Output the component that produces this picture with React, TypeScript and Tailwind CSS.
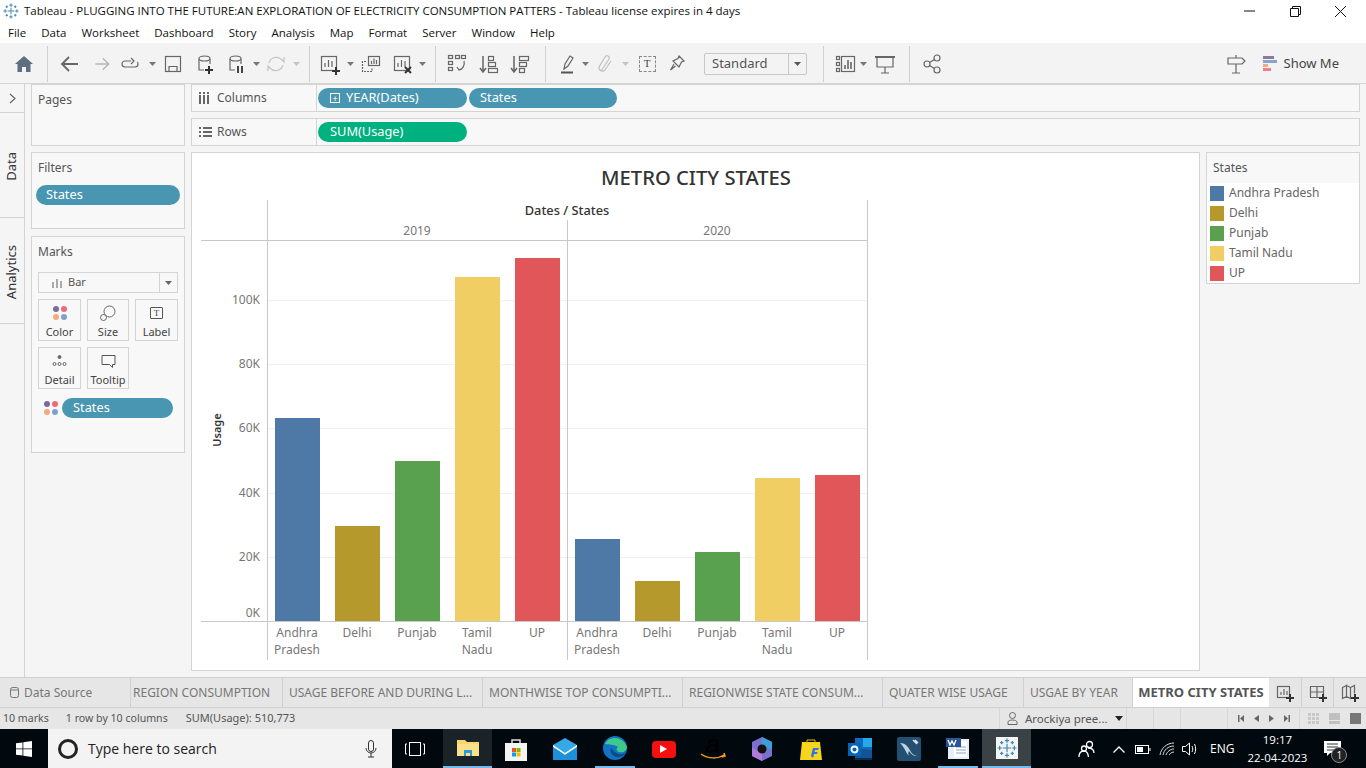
import React from "react";

const font = "font-['Noto_Sans',sans-serif]";
const Sep = () => <div className="w-px h-[36px] bg-[#d0d0d0] shrink-0" />;
const Caret = ({ light }: { light?: boolean }) => (
  <div className="w-[8px] flex justify-center shrink-0">
    <svg width="7" height="4"><path d="M0 0h7L3.5 4z" fill={light ? "#c4c4c4" : "#777"} /></svg>
  </div>
);
const S = ({ className, children, d, sw = 1.2, c = "#666", box = 24 }: { className: string; children?: React.ReactNode; d?: string; sw?: number; c?: string; box?: number }) => (
  <div className={`flex justify-center items-center shrink-0 ${className}`}>
    <svg width={box} height={box} viewBox={`0 0 ${box} ${box}`} fill="none" stroke={c} strokeWidth={sw}>
      {d && <path d={d} />}
      {children}
    </svg>
  </div>
);
const Plus = ({ x, y, c = "#333" }: { x: number; y: number; c?: string }) => <path d={`M${x - 4} ${y}h8M${x} ${y - 4}v8`} stroke={c} strokeWidth={2} />;

const TableauLogo = ({ size }: { size: number }) => {
  const p = (x: number, y: number, a: number) => `M${x - a} ${y}h${2 * a}M${x} ${y - a}v${2 * a}`;
  const d = [p(7.5, 7.5, 3.2), p(7.5, 2, 1.6), p(7.5, 13, 1.6), p(2, 7.5, 1.6), p(13, 7.5, 1.6), p(3.5, 3.5, 1.2), p(11.5, 3.5, 1.2), p(3.5, 11.5, 1.2), p(11.5, 11.5, 1.2)].join("");
  return (
    <svg width={size} height={size} viewBox="0 0 15 15" fill="none" stroke="#3f87b4" strokeWidth="0.900" className="shrink-0">
      <path d={d} />
    </svg>
  );
};

function Toolbar() {
  return (
    <div className="h-[41px] bg-[#f3f3f3] border-b border-[#d4d4d4] flex items-center shrink-0 pt-[1px]">
      <div className="w-[47px] flex justify-center shrink-0">
        <svg width="18" height="16" viewBox="0 0 18 16"><path d="M9 0L0 8h2.5v8h4.5v-5h4v5h4.500V8H18z" fill="#5f6f7f" /></svg>
      </div>
      <Sep />
      <S className="w-[44px]" d="M20 12H5M11 5l-7 7 7 7" sw={1.8} c="#666" />
      <S className="w-[20px]" d="M4 12h15M13 5l7 7-7 7" sw={1.8} c="#b8b8b8" />
      <S className="w-[36px]" d="M13 9H7a3 3 0 000 6h10a3 3 0 003-3c0-1-.500-2-1-2M13 6l3 3-3 3" c="#666" />
      <Caret />
      <S className="w-[34px]" c="#666"><rect x="4.500" y="4.500" width="15" height="15" /><path d="M8 19.500v-5h8v5" /></S>
      <S className="w-[30px]"><path d="M6 7v11h5" /><ellipse cx="11.500" cy="6.500" rx="5.500" ry="2.500" /><path d="M17 7v5" /><Plus x={16} y={18} /></S>
      <S className="w-[32px]"><path d="M6 7v11h5" /><ellipse cx="11.500" cy="6.500" rx="5.500" ry="2.500" /><path d="M17 7v5" /><path d="M14 14v7M18 14v7" stroke="#444" strokeWidth={2} /></S>
      <Caret />
      <S className="w-[32px]" d="M5 11a7.500 7.500 0 0113-3l2 2V5M19 13a7.500 7.500 0 01-13 3l-2-2v5" c="#c4c4c4" />
      <Caret light />
      <div className="w-[9px] shrink-0" />
      <Sep />
      <S className="w-[32px] ml-[4px]"><rect x="3.500" y="4.500" width="15" height="14" /><path d="M7 15v-4M10.500 15V8M14 15v-6" /><Plus x={18} y={19} /></S>
      <Caret />
      <S className="w-[34px]"><rect x="9.500" y="4.500" width="11" height="9" /><path d="M12.500 12V9M15 12V6.500M17.500 12V8" /><path d="M7 9.500H3.500V19.500H13V16" strokeDasharray="2 1" /></S>
      <S className="w-[30px]"><rect x="3.500" y="4.500" width="15" height="14" /><path d="M7 15v-4M10.500 15V8M14 15v-6" /><path d="M14 15l6 6M20 15l-6 6" stroke="#333" strokeWidth={2} /></S>
      <Caret />
      <div className="w-[9px] shrink-0" />
      <Sep />
      <S className="w-[42px]"><rect x="3.500" y="3.500" width="4" height="3" /><rect x="3.500" y="9.500" width="4" height="3" /><rect x="3.500" y="15.500" width="4" height="3" /><rect x="10.500" y="3.500" width="4" height="3" /><rect x="16.500" y="3.500" width="4" height="3" /><path d="M19 9c1 4-1 8-5 9M12 15l2 3 3-1" /></S>
      <S className="w-[24px]"><path d="M5 4v15M2 16l3 4 3-4" strokeWidth={1.5} /><rect x="10.500" y="4.500" width="5" height="4" /><rect x="10.500" y="10.500" width="7" height="4" /><rect x="10.500" y="16.500" width="9" height="4" /></S>
      <S className="w-[38px]"><path d="M5 4v15M2 16l3 4 3-4" strokeWidth={1.5} /><rect x="10.500" y="4.500" width="9" height="4" /><rect x="10.500" y="10.500" width="7" height="4" /><rect x="10.500" y="16.500" width="5" height="4" /></S>
      <div className="w-[5px] shrink-0" />
      <Sep />
      <S className="w-[26px] ml-[9px]"><path d="M8 17l1-5 5-8 3 2-5 8z" /><path d="M5 20.500h12" stroke="#555" strokeWidth={2} /></S>
      <Caret />
      <S className="w-[30px]" d="M9 19l8-12a2 2 0 00-4-2L7 15a3.500 3.500 0 006 3l6-9" c="#c0c0c0" />
      <div className="w-[2px] shrink-0" />
      <Caret light />
      <div className="w-[36px] h-[24px] flex justify-center items-center shrink-0">
        <div className="w-[17px] h-[16px] border border-dashed border-[#888] flex items-center justify-center text-[11px] leading-none text-[#444] font-['Liberation_Serif',serif]">T</div>
      </div>
      <S className="w-[24px]" d="M14 4l5 5-2.500 1-2.500 5-6-6 5-2.500zM9 12l-3.500 6 5-4" />
      <div className={`ml-[15px] w-[103px] h-[22px] border border-[#c8c8c8] rounded-[2px] flex items-center shrink-0 ${font}`}>
        <span className="flex-1 pl-[7px] text-[13px] text-[#555]">Standard</span>
        <div className="w-[18px] h-full border-l border-[#c8c8c8] flex items-center justify-center">
          <svg width="7" height="4"><path d="M0 0h7L3.500 4z" fill="#555" /></svg>
        </div>
      </div>
      <div className="w-[16px] shrink-0" />
      <Sep />
      <S className="w-[27px] ml-[8px]"><rect x="2.500" y="4.500" width="3" height="3" /><rect x="2.500" y="10.500" width="3" height="3" /><rect x="2.500" y="16.500" width="3" height="3" /><rect x="7.500" y="4.500" width="13" height="15" /><path d="M11 17v-4M14 17V8M17 17v-7" strokeWidth={1.600} /></S>
      <Caret />
      <S className="w-[36px]"><path d="M2 5h20" strokeWidth={2} /><path d="M4 5v10h16V5M12 15v6M8 21h8" /></S>
      <div className="w-[6px] shrink-0" />
      <Sep />
      <S className="w-[44px]"><circle cx="17" cy="6" r="3" /><circle cx="7" cy="12" r="3" /><circle cx="17" cy="18" r="3" /><path d="M9.500 10.500l5-3M9.500 13.500l5 3" /></S>
      <div className="flex-1" />
      <S className="w-[28px]"><path d="M4 6h14l3 3-3 3H4zM12 6V3M12 12v9M8 21h8" /></S>
      <div className="w-[13px] shrink-0" />
      <div className="flex flex-col gap-[1px] w-[15px] shrink-0">
        <div className="h-[3px] w-[11px] bg-[#8a7aa0]" />
        <div className="h-[3px] w-[14px] bg-[#85a5cc]" />
        <div className="h-[3px] w-[5px] bg-[#f4a97f]" />
        <div className="h-[3px] w-[8px] bg-[#f47c8a]" />
      </div>
      <span className={`ml-[6px] mr-[27px] text-[13px] text-[#444] ${font}`}>Show Me</span>
    </div>
  );
}

const Pill = ({ className, children }: { className: string; children: React.ReactNode }) => (
  <div className={`h-[20px] rounded-full flex items-center text-white text-[12.800px] ${className}`}>{children}</div>
);

const MarkBtn = ({ label, className = "", children }: { label: string; className?: string; children: React.ReactNode }) => (
  <div className={`h-[42px] border border-[#d4d4d4] flex flex-col items-center text-[11px] leading-none text-[#444] ${className}`}>
    <div className="h-[26px] flex items-center justify-center">{children}</div>
    <span>{label}</span>
  </div>
);

const Dots = () => (
  <div className="grid grid-cols-2 gap-[2px] w-[14px] shrink-0">
    <div className="w-[6px] h-[6px] rounded-full bg-[#7d6b96]" />
    <div className="w-[6px] h-[6px] rounded-full bg-[#ee6a78]" />
    <div className="w-[6px] h-[6px] rounded-full bg-[#f4a97f]" />
    <div className="w-[6px] h-[6px] rounded-full bg-[#7fa2cc]" />
  </div>
);

function Sidebar() {
  const card = "bg-[#f8f8f8] border border-[#d4d4d4] shrink-0 text-[12px] text-[#555]";
  return (
    <div className="w-[154px] ml-[6px] flex flex-col shrink-0">
      <div className={`${card} h-[62px] pt-[6px] pl-[6px]`}>Pages</div>
      <div className={`${card} h-[77px] mt-[6px] pt-[6px] pl-[4px]`}>
        <div className="pl-[2px]">Filters</div>
        <Pill className="w-[144px] mt-[8px] pl-[10px] bg-[#4996b2]">States</Pill>
      </div>
      <div className={`${card} h-[217px] mt-[7px] pt-[6px] pl-[6px]`}>
        <div>Marks</div>
        <div className="w-[140px] h-[21px] mt-[11px] border border-[#d4d4d4] flex items-center">
          <svg className="ml-[12px]" width="12" height="10" viewBox="0 0 12 10" fill="#aaa"><path d="M1 4h2v6H1zM5 1h2v9H5zM9 3h2v7H9z" /></svg>
          <span className="flex-1 ml-[5px] text-[11px]">Bar</span>
          <div className="w-[18px] h-full border-l border-[#d4d4d4] flex items-center justify-center">
            <svg width="7" height="4"><path d="M0 0h7L3.500 4z" fill="#666" /></svg>
          </div>
        </div>
        <div className="flex mt-[6px]">
          <MarkBtn label="Color" className="w-[43px]"><Dots /></MarkBtn>
          <MarkBtn label="Size" className="w-[42px] ml-[6px]">
            <svg width="16" height="16" viewBox="0 0 16 16" fill="none" stroke="#666"><circle cx="9.500" cy="6.500" r="5.500" /><circle cx="3.500" cy="12.500" r="3" fill="#f8f8f8" /></svg>
          </MarkBtn>
          <MarkBtn label="Label" className="w-[43px] ml-[6px]">
            <div className="w-[13px] h-[12px] border border-[#555] rounded-[1px] flex items-center justify-center text-[9px] font-['Liberation_Serif',serif]">T</div>
          </MarkBtn>
        </div>
        <div className="flex mt-[6px]">
          <MarkBtn label="Detail" className="w-[43px]">
            <svg width="15" height="12" viewBox="0 0 15 12" fill="none" stroke="#666"><circle cx="7.500" cy="2" r="1.500" fill="#666" /><circle cx="2.500" cy="9" r="1.500" /><circle cx="7.500" cy="9" r="1.500" /><circle cx="12.500" cy="9" r="1.500" /></svg>
          </MarkBtn>
          <MarkBtn label="Tooltip" className="w-[42px] ml-[6px]">
            <svg width="15" height="15" viewBox="0 0 15 15" fill="none" stroke="#555"><path d="M1 1.500h13v9h-2.500v3l-3-3H1z" /></svg>
          </MarkBtn>
        </div>
        <div className="flex items-center mt-[9px] ml-[6px]">
          <Dots />
          <Pill className="w-[111px] ml-[4px] pl-[11px] bg-[#4996b2]">States</Pill>
        </div>
      </div>
    </div>
  );
}

const bars = [
  [275, 418, "#4e79a7"], [335, 526, "#b6992d"], [395, 461, "#59a14f"], [455, 277, "#f1ce63"], [515, 258, "#e15759"],
  [575, 539, "#4e79a7"], [635, 581, "#b6992d"], [695, 552, "#59a14f"], [755, 478, "#f1ce63"], [815, 475, "#e15759"],
] as const;
const ticks = [[300, "100K", 304], [364, "80K", 368], [428, "60K", 432], [493, "40K", 497], [557, "20K", 561], [621, "0K", 617]] as const;
const names = [["Andhra", "Pradesh"], ["Delhi"], ["Punjab"], ["Tamil", "Nadu"], ["UP"]];

function Chart() {
  return (
    <div className="w-[1009px] h-[519px] bg-white border border-[#d4d4d4] shrink-0">
      <svg width="1007" height="517" viewBox="192 153 1007 517" className={font}>
        <text x="696" y="185" textAnchor="middle" fontSize="20.200" fontWeight="500" fill="#333">METRO CITY STATES</text>
        <text x="567" y="215" textAnchor="middle" fontSize="12.800" fontWeight="500" fill="#333">Dates / States</text>
        <text x="417" y="235" textAnchor="middle" fontSize="12" fill="#777">2019</text>
        <text x="717" y="235" textAnchor="middle" fontSize="12" fill="#777">2020</text>
        {ticks.slice(0, 5).map(([y]) => <path key={y} d={`M268 ${y}.5H867`} stroke="#f0f0f0" />)}
        <path d="M201 240.500H868M201 621.500H868M267.500 200V660M567.500 220V660M867.500 200V660" stroke="#c8c8c8" />
        {bars.map(([x, y, c]) => <rect key={x} x={x} y={y} width="45" height={621 - y} fill={c} />)}
        {ticks.map(([y, t, ty]) => <text key={t} x="260" y={ty} textAnchor="end" fontSize="12" fill="#777">{t}</text>)}
        <text transform="translate(221 430) rotate(-90)" textAnchor="middle" fontSize="11" fontWeight="600" fill="#333">Usage</text>
        {[297, 597].map((x0) => names.map((n, i) => n.map((l, j) => (
          <text key={`${x0}${l}`} x={x0 + i * 60} y={637 + j * 17} textAnchor="middle" fontSize="12" fill="#777">{l}</text>
        ))))}
      </svg>
    </div>
  );
}

const legend = [["Andhra Pradesh", "bg-[#4e79a7]"], ["Delhi", "bg-[#b6992d]"], ["Punjab", "bg-[#59a14f]"], ["Tamil Nadu", "bg-[#f1ce63]"], ["UP", "bg-[#e15759]"]];

function Shelf({ label, icon, children, className }: { label: string; icon: React.ReactNode; children: React.ReactNode; className: string }) {
  return (
    <div className={`bg-[#f8f8f8] border border-[#d4d4d4] flex items-center shrink-0 text-[12px] text-[#555] ${className}`}>
      <div className="w-[125px] h-full border-r border-[#d4d4d4] flex items-center pl-[7px] shrink-0">
        <div className="w-[18px]">{icon}</div>
        <span>{label}</span>
      </div>
      {children}
    </div>
  );
}

function Main() {
  return (
    <div className={`flex h-[593px] bg-[#f5f5f5] shrink-0 ${font}`}>
      <div className="w-[25px] border-r border-[#d4d4d4] flex flex-col text-[13px] text-[#333] shrink-0">
        <div className="h-[29px] border-b border-[#d4d4d4] flex items-center justify-center">
          <svg width="7" height="11" fill="none" stroke="#666" strokeWidth="1.200"><path d="M1 1l5 4.500-5 4.500" /></svg>
        </div>
        <div className="h-[105px] border-b border-[#d4d4d4] flex items-center justify-center pt-[2px]"><span className="[writing-mode:vertical-rl] rotate-180">Data</span></div>
        <div className="h-[106px] border-b border-[#d4d4d4] flex items-center justify-center pt-[4px]"><span className="[writing-mode:vertical-rl] rotate-180">Analytics</span></div>
      </div>
      <Sidebar />
      <div className="ml-[6px] w-[1169px] flex flex-col shrink-0">
        <Shelf className="h-[28px]" label="Columns" icon={<svg width="11" height="12" fill="#666"><path d="M0 3h2v9H0zM4 3h2v9H4zM8 3h2v9H8zM0 0h2v2H0zM4 0h2v2H4zM8 0h2v2H8z" /></svg>}>
          <Pill className="w-[149px] ml-[1px] pl-[12px] bg-[#4996b2]">
            <span className="w-[10px] h-[10px] border border-white mr-[6px] flex items-center justify-center text-[9px] leading-none">+</span>
            YEAR(Dates)
          </Pill>
          <Pill className="w-[148px] ml-[2px] pl-[11px] bg-[#4996b2]">States</Pill>
        </Shelf>
        <Shelf className="h-[28px] mt-[6px]" label="Rows" icon={<svg width="13" height="10" fill="#666"><path d="M0 0h2v2H0zM4 0h9v2H4zM0 4h2v2H0zM4 4h9v2H4zM0 8h2v2H0zM4 8h9v2H4z" /></svg>}>
          <Pill className="w-[149px] ml-[1px] pl-[12px] bg-[#00b180]">SUM(Usage)</Pill>
        </Shelf>
        <div className="flex mt-[6px] items-start">
          <Chart />
          <div className="w-[154px] h-[132px] ml-[6px] bg-[#f8f8f8] border border-[#d4d4d4] shrink-0 text-[12px] text-[#555]">
            <div className="h-[30px] pl-[6px] pt-[6px]">States</div>
            <div className="bg-white h-[100px]">
              {legend.map(([n, c]) => (
                <div key={n} className="h-[20px] flex items-center pl-[3px]">
                  <div className={`w-[14px] h-[15px] ${c}`} />
                  <span className="ml-[5px] text-[#666]">{n}</span>
                </div>
              ))}
            </div>
          </div>
        </div>
      </div>
    </div>
  );
}

const tabs = [
  ["REGION CONSUMPTION", "w-[152px] pl-[2px]"],
  ["USAGE BEFORE AND DURING L...", "w-[200px] pl-[6px]"],
  ["MONTHWISE TOP CONSUMPTI...", "w-[200px] pl-[6px]"],
  ["REGIONWISE STATE CONSUM...", "w-[200px] pl-[6px]"],
  ["QUATER WISE USAGE", "w-[141px] pl-[6px]"],
  ["USGAE BY YEAR", "w-[109px] pl-[6px]"],
];

function Tabs() {
  return (
    <div className={`h-[31px] bg-[#e6e6e6] border-y border-[#d0d0d0] flex shrink-0 text-[12px] text-[#777] ${font}`}>
      <div className="w-[131px] border-r border-[#d0d0d0] flex items-center pl-[10px] shrink-0">
        <svg width="9" height="11" viewBox="0 0 9 11" fill="none" stroke="#777" className="mr-[5px]"><rect x="0.500" y="0.500" width="8" height="10" rx="2" /><path d="M0.500 3h8" /></svg>
        Data Source
      </div>
      {tabs.map(([t, w]) => (
        <div key={t} className={`${w} border-r border-[#d0d0d0] flex items-center shrink-0 whitespace-nowrap overflow-hidden`}>{t}</div>
      ))}
      <div className="w-[136px] bg-white flex items-center justify-center font-bold text-[13px] text-[#555] shrink-0">METRO CITY STATES</div>
      <S className="w-[32px]" box={20}><rect x="2.500" y="3.500" width="12" height="11" /><path d="M6 12V9M9 12V6M12 12V8" /><Plus x={15} y={15} /></S>
      <S className="w-[32px] border-l border-[#d0d0d0]" box={20}><path d="M2.500 3.500h13v11h-13zM2.500 9h13M9 3.500v11" /><Plus x={15} y={15} /></S>
      <S className="w-[33px] border-l border-[#d0d0d0]" box={20}><path d="M2.500 4.500l4-2v11l-4 2zM6.500 2.500l4 2v11l-4-2zM10.500 4.500l4-2v8" /><Plus x={15} y={15} /></S>
    </div>
  );
}

function Status() {
  const b = "h-full border-l border-[#d8d8d8] shrink-0";
  return (
    <div className={`h-[21px] bg-[#e6e6e6] flex items-center shrink-0 text-[10.600px] text-[#555] ${font}`}>
      <span className="ml-[3px]">10 marks</span>
      <span className="ml-[17px]">1 row by 10 columns</span>
      <span className="ml-[18px] text-[11px]">SUM(Usage): 510,773</span>
      <div className="flex-1" />
      <div className={`${b} w-[127px] flex items-center pl-[7px]`}>
        <svg width="11" height="13" viewBox="0 0 11 13" fill="none" stroke="#666"><circle cx="5.500" cy="3.500" r="3" /><path d="M1 12.500V10c0-1 2-2 4.500-2S10 9 10 10v2.500z" /></svg>
        <span className="ml-[7px] text-[11.500px]">Arockiya pree...</span>
        <svg className="ml-[7px]" width="8" height="5"><path d="M0 0h8L4 5z" fill="#222" /></svg>
      </div>
      <div className={`${b} w-[27px]`} />
      <div className={`${b} w-[27px]`} />
      <div className={`${b} w-[47px]`} />
      <div className={`${b} w-[72px] flex items-center justify-center gap-[10px]`}>
        <svg width="6" height="7" fill="#666"><path d="M0 0h1.500v7H0zM6 0v7L2 3.500z" /></svg>
        <svg width="5" height="7" fill="#666"><path d="M5 0v7L0 3.500z" /></svg>
        <svg width="5" height="7" fill="#666"><path d="M0 0v7l5-3.500z" /></svg>
        <svg width="6" height="7" fill="#666"><path d="M0 0v7l4-3.500zM4.500 0H6v7H4.500z" /></svg>
      </div>
      <div className={`${b} w-[67px] flex items-center pl-[8px] gap-[10px]`}>
        <div className="w-[11px] h-[11px] grid grid-cols-3 gap-[1px]">
          {[0, 1, 2, 3, 4, 5, 6, 7, 8].map((i) => <div key={i} className="bg-[#c8c8c8]" />)}
        </div>
        <div className="w-[11px] h-[11px] flex flex-col gap-[1px]"><div className="h-[7px] bg-[#c0c0c0]" /><div className="h-[3px] bg-[#c0c0c0]" /></div>
        <div className="w-[11px] h-[11px] bg-[#777]" />
      </div>
    </div>
  );
}

const Slot = ({ className = "", children }: { className?: string; children: React.ReactNode }) => (
  <div className={`w-[49px] h-full flex items-center justify-center shrink-0 ${className}`}>{children}</div>
);
const Open = ({ children }: { children: React.ReactNode }) => (
  <div className="w-[40px] h-full flex items-center justify-center border-b-[3px] border-[#76b9ed]">{children}</div>
);

function Taskbar() {
  return (
    <div className="h-[40px] bg-[#01090e] flex items-center shrink-0 text-white font-['Open_Sans',sans-serif]">
      <div className="w-[48px] flex justify-center shrink-0">
        <svg width="16" height="16" viewBox="0 0 16 16" fill="#fff"><path d="M0 2.300L6.500 1.400V7.500H0zM7.300 1.300L16 0V7.500H7.300zM0 8.300H6.500V14.600L0 13.700zM7.300 8.300H16V16L7.300 14.700z" /></svg>
      </div>
      <div className="w-[344px] h-full bg-[#f3f3f3] flex items-center pl-[10px] shrink-0 text-[#222]">
        <div className="w-[20px] h-[20px] rounded-full border-[3px] border-[#222]" />
        <span className="ml-[10px] flex-1 text-[14px] pb-[2px]">Type here to search</span>
        <svg className="mr-[15px]" width="12" height="18" viewBox="0 0 12 18" fill="none" stroke="#333"><rect x="3.500" y="0.500" width="5" height="11" rx="2.500" /><path d="M1 8a5 5 0 0010 0M6 13v4M3 17h6" /></svg>
      </div>
      <div className="w-[46px] flex justify-center shrink-0">
        <svg width="20" height="14" viewBox="0 0 20 14" fill="none" stroke="#fff"><rect x="4.500" y="0.500" width="11" height="13" /><path d="M2 2H0.500V12H2M18 2h1.500V12H18" /></svg>
      </div>
      <div className="w-[5px] shrink-0" />
      <Slot className="bg-[#1a2327] border-b-[3px] border-[#76b9ed]">
        <svg width="22" height="18" viewBox="0 0 22 18"><path d="M0 1h8l2 2h12v14H0z" fill="#f9d76c" /><path d="M0 5h22v12H0z" fill="#fbe08a" /><path d="M7 11h8v6h-2v-3H9v3H7z" fill="#2a9bd8" /></svg>
      </Slot>
      <Slot>
        <svg className="-ml-[2px]" width="24" height="24" viewBox="0 0 24 24"><path d="M8 7V3h8v4" fill="none" stroke="#ddd" strokeWidth="1.500" /><rect x="1" y="6" width="22" height="18" fill="#f4f4f4" /><path d="M8 11h4v4H8z" fill="#f25022" /><path d="M12.500 11h4v4h-4z" fill="#7fba00" /><path d="M8 15.500h4v4H8z" fill="#00a4ef" /><path d="M12.500 15.500h4v4h-4z" fill="#ffb900" /></svg>
      </Slot>
      <Slot>
        <svg className="-ml-[1px]" width="24" height="22" viewBox="0 0 24 22"><path d="M12 0l12 7v15H0V7z" fill="#35a8e8" /><path d="M0 7l12 8 12-8v2L12 17 0 9z" fill="#fff" /><path d="M0 9l12 8 12-8v13H0z" fill="#1c90d8" /></svg>
      </Slot>
      <Slot>
        <Open>
          <svg width="24" height="24" viewBox="0 0 24 24"><circle cx="12" cy="12" r="12" fill="#1173c4" /><path d="M2 8C5 0 20-1 24 11c0 4-4 6-8 5-3-1-3-4-1-5-4-3-9-2-13-3z" fill="#3ec98a" /><path d="M8 12c-2 5 3 10 8 9 4-.500 6-3 7-5-3 3-8 3-11 0-2-1-3-3-4-4z" fill="#0c4a80" /></svg>
        </Open>
      </Slot>
      <Slot>
        <div className="w-[24px] h-[17px] bg-[#f50f0f] rounded-[4px] flex items-center justify-center">
          <svg width="7" height="8"><path d="M0 0l7 4-7 4z" fill="#fff" /></svg>
        </div>
      </Slot>
      <Slot>
        <svg width="26" height="24" viewBox="0 0 26 24" fill="none"><path d="M9 6c1-4 8-4 8 0v9M17 8c-6 0-10 1-10 4.500S14 16 17 12" stroke="#000" strokeWidth="2.500" /><path d="M1 17c7 5 17 5 23 1M24 16l1 3-3 1" stroke="#f59b1c" strokeWidth="1.500" /></svg>
      </Slot>
      <Slot>
        <svg width="22" height="24" viewBox="0 0 22 24"><path d="M11 0l10 5v14l-10 5L1 19V5z" fill="#7d6fd0" /><path d="M11 0l10 5v8l-10-5z" fill="#3aa0d8" /><path d="M1 11l10 5v8l-10-5z" fill="#b27ad8" /><circle cx="11" cy="12" r="4.500" fill="#111" /></svg>
      </Slot>
      <Slot>
        <svg width="22" height="22" viewBox="0 0 22 22"><path d="M2 4h18l2 18H0z" fill="#f7d51d" /><path d="M7 5V2h8v3" fill="none" stroke="#e6b800" /><path d="M11 18l2-8h6l-1 2h-3l-.500 2h3l-.500 2h-3l-1 4z" fill="#2874f0" /></svg>
      </Slot>
      <Slot>
        <svg width="24" height="22" viewBox="0 0 24 22"><path d="M7 0h17v20H7z" fill="#0f6cbd" /><path d="M15 0h9v9h-9z" fill="#28a8ea" /><path d="M7 10l17 2v10H7z" fill="#14447d" opacity=".6" /><rect x="0" y="5" width="13" height="13" fill="#0364b8" /><circle cx="6.500" cy="11.500" r="3" fill="none" stroke="#fff" strokeWidth="1.800" /></svg>
      </Slot>
      <Slot>
        <svg width="24" height="24" viewBox="0 0 24 24"><rect width="24" height="24" rx="2" fill="#234f72" /><path d="M3 6c6 0 9 5 11 9 1 2 3 3 6 4-4 0-6-2-8-5-1 2-1 3 0 5-3-3-4-8-9-13z" fill="#bcd3e3" /><path d="M16 3l4 4M18 3l3 3" stroke="#dde" strokeWidth="1.500" /></svg>
      </Slot>
      <Slot>
        <Open>
          <svg width="24" height="24" viewBox="0 0 24 24"><rect x="2" y="3" width="21" height="20" fill="#e8eef6" /><rect x="8" y="5" width="13" height="16" fill="#fff" /><path d="M10 11h10M10 14h10M10 17h10" stroke="#8aa4cc" /><rect x="0" y="2" width="15" height="9" fill="#2a5699" /><path d="M2 4l2 5 2-4 2 4 2-5" stroke="#fff" strokeWidth="1.300" fill="none" /></svg>
        </Open>
      </Slot>
      <Slot className="bg-[#3a4246] border-b-[3px] border-[#76b9ed]">
        <div className="w-[22px] h-[22px] bg-[#f4f4f4] flex items-center justify-center">
          <TableauLogo size={20} />
        </div>
      </Slot>
      <div className="w-[47px] shrink-0" />
      <svg className="shrink-0" width="18" height="18" viewBox="0 0 18 18" fill="none" stroke="#fff" strokeWidth="1.300"><circle cx="11.500" cy="4.500" r="3" /><circle cx="6" cy="8.500" r="2.500" /><path d="M1 17c0-4 2-6 5-6s4 2 4.500 6M10 8c3 0 6 1 6 5" /></svg>
      <div className="w-[17px] shrink-0" />
      <svg className="shrink-0" width="12" height="7" viewBox="0 0 12 7" fill="none" stroke="#fff" strokeWidth="1.300"><path d="M0.500 6.500L6 1l5.500 5.500" /></svg>
      <div className="w-[10px] shrink-0" />
      <svg className="shrink-0" width="16" height="9" viewBox="0 0 16 9" fill="none" stroke="#fff"><rect x="0.500" y="0.500" width="13" height="8" /><rect x="2" y="2" width="6" height="5" fill="#fff" stroke="none" /><path d="M15 3v3" /></svg>
      <div className="w-[8px] shrink-0" />
      <svg className="shrink-0" width="16" height="14" viewBox="0 0 16 14" fill="none" stroke="#ddd"><path d="M1 13C2 6 8 1 15 1M4 13C5 8 9 4 15 4M7 13c1-3 4-6 8-6M10 13c1-1 2-3 5-3" /></svg>
      <div className="w-[7px] shrink-0" />
      <svg className="shrink-0" width="17" height="14" viewBox="0 0 17 14" fill="none" stroke="#fff"><path d="M0.500 4.500h3l4-3.500v12l-4-3.500h-3zM10 4c1 2 1 4 0 6M12.500 2c1.500 3 1.500 7 0 10" /></svg>
      <span className="ml-[11px] text-[12px] shrink-0">ENG</span>
      <div className="ml-[6px] w-[74px] flex flex-col items-center text-[11.500px] leading-[18px] shrink-0 whitespace-nowrap">
        <span>19:17</span>
        <span>22-04-2023</span>
      </div>
      <div className="relative ml-[10px] shrink-0">
        <svg width="17" height="16" viewBox="0 0 17 16" fill="#fff"><path d="M0 0h17v12H6l-3 3v-3H0z" /><path d="M3 3h11M3 6h11M3 9h8" stroke="#333" /></svg>
        <div className="absolute left-[7px] top-[6px] w-[16px] h-[16px] rounded-full bg-[#222] border border-[#888] flex items-center justify-center text-[10px] leading-none">1</div>
      </div>
    </div>
  );
}

export default function App() {
  return (
    <div className="w-[1366px] h-[768px] overflow-hidden bg-white flex flex-col font-['Open_Sans',sans-serif]">
      <div className="h-[22px] flex items-center shrink-0 relative text-[11.500px] text-[#111]">
        <div className="ml-[3px] mr-[5px]"><TableauLogo size={16} /></div>
        <span>Tableau - PLUGGING INTO THE FUTURE:AN EXPLORATION OF ELECTRICITY CONSUMPTION PATTERS - Tableau license expires in 4 days</span>
        <div className="absolute right-0 top-0 h-[22px] flex items-center">
          <svg width="11" height="2"><path d="M0 1h11" stroke="#111" /></svg>
          <svg className="ml-[35px]" width="11" height="11" viewBox="0 0 11 11" fill="none" stroke="#111"><path d="M0.500 2.500h8v8h-8zM2.500 2.500v-2h8v8h-2" /></svg>
          <svg className="ml-[34px] mr-[20px]" width="11" height="11" viewBox="0 0 11 11" stroke="#111"><path d="M0 0l11 11M11 0L0 11" /></svg>
        </div>
      </div>
      <div className="h-[21px] flex items-center gap-[15px] pl-[8px] shrink-0 text-[11.500px] text-[#111]">
        {["File", "Data", "Worksheet", "Dashboard", "Story", "Analysis", "Map", "Format", "Server", "Window", "Help"].map((m) => <span key={m}>{m}</span>)}
      </div>
      <Toolbar />
      <Main />
      <Tabs />
      <Status />
      <Taskbar />
    </div>
  );
}
